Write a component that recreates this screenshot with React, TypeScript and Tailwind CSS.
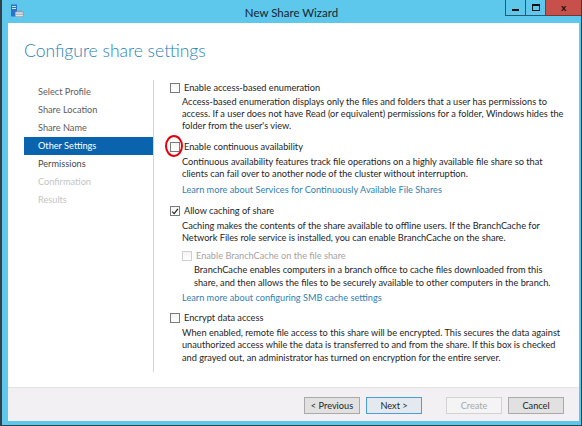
import React from 'react';

const font = { fontFamily: '"Segoe UI", Lato, "Noto Sans", sans-serif' };

const Box: React.FC<{ checked?: boolean; disabled?: boolean }> = ({ checked, disabled }) => (
    <span
        className={`relative inline-flex w-[10px] h-[10px] shrink-0 items-center justify-center border bg-gradient-to-b from-[#f4f4f4] to-white ${disabled ? 'border-[#cfcfcf]' : 'border-[#7a7a7a]'}`}
    >
        {checked && (
            <svg viewBox="0 0 10 10" className="w-[9px] h-[9px]">
                <path d="M1.5 5.2 L4 7.6 L8.6 1.8" fill="none" stroke="#222" strokeWidth="1.5" />
            </svg>
        )}
    </span>
);

const Option: React.FC<{ label: string; checked?: boolean; disabled?: boolean; circled?: boolean }> = ({
    label,
    checked,
    disabled,
    circled,
}) => (
    <div className="flex items-center h-[12px] leading-[12px]">
        <span className="relative inline-flex">
            <Box checked={checked} disabled={disabled} />
            {circled && (
                <span className="absolute left-[-5px] top-[-7px] w-[18px] h-[22px] rounded-[50%] border-2 border-[#e4000f]" />
            )}
        </span>
        <span className={`ml-[4px] ${disabled ? 'text-[#a3a3a3]' : 'text-[#1e1e1e]'}`}>{label}</span>
    </div>
);

const navItems = [
    { name: 'Select Profile', state: 'done' },
    { name: 'Share Location', state: 'done' },
    { name: 'Share Name', state: 'done' },
    { name: 'Other Settings', state: 'active' },
    { name: 'Permissions', state: 'next' },
    { name: 'Confirmation', state: 'off' },
    { name: 'Results', state: 'off' },
];

export default function App() {
    return (
        <div
            className="w-[582px] h-[426px] flex flex-col bg-[#5dc8ec] border-l-2 border-r border-b border-[#33414b] text-[9.2px] overflow-hidden"
            style={font}
        >
            {/* Title bar */}
            <div className="relative h-[23px] shrink-0 flex items-center">
                <svg viewBox="0 0 14 14" className="absolute left-[8px] top-[4px] w-[14px] h-[14px]">
                    <rect x="1" y="0.5" width="6" height="12" fill="#2b72c9" />
                    <rect x="2" y="2" width="4" height="1" fill="#cfe4ff" />
                    <rect x="2" y="4" width="4" height="1" fill="#cfe4ff" />
                    <rect x="5" y="7.5" width="8.5" height="5.5" rx="0.8" fill="#8d99a5" />
                    <rect x="5.7" y="8.3" width="7.1" height="4" fill="#dfe5ea" />
                    <rect x="8" y="6.5" width="3" height="1.3" fill="#8d99a5" />
                    <rect x="5.7" y="9.8" width="7.1" height="0.8" fill="#8d99a5" />
                </svg>
                <div className="flex-1 text-center text-[11.5px] text-[#17242e] pt-[3px]">New Share Wizard</div>
                <div className="absolute right-0 top-0 flex h-[16px]">
                    <div className="w-[21px] h-full border border-[#2a5870] border-t-0 flex items-end justify-center pb-[4px]">
                        <span className="w-[7px] h-[2px] bg-[#111]" />
                    </div>
                    <div className="w-[20px] h-full border border-l-0 border-[#2a5870] border-t-0 flex items-center justify-center">
                        <span className="w-[8px] h-[7px] border border-t-2 border-[#111]" />
                    </div>
                    <div className="w-[35px] h-full bg-[#c7514a] border-b border-[#7a3530] flex items-center justify-center text-[10px] font-bold text-[#111]">
                        x
                    </div>
                </div>
            </div>

            {/* Client area */}
            <div className="flex-1 ml-[6px] mr-[2px] mb-[4px] bg-white flex flex-col">
                <h1 className="pl-[16px] pt-[16px] h-[57px] text-[17.5px] font-light text-[#2b82b8] leading-[23px]" style={{ fontFamily: 'Lato, "Segoe UI", sans-serif' }}>
                    Configure share settings
                </h1>

                <div className="flex flex-1 mb-[15px]">
                    {/* Steps */}
                    <div className="w-[146px] shrink-0 pl-[16px] pt-[3px] border-r border-[#d4d4d4]">
                        {navItems.map((item) => (
                            <div
                                key={item.name}
                                className={`h-[18px] leading-[18px] pl-[14px] w-[129px] ${
                                    item.state === 'active'
                                        ? 'bg-[#0a64ad] text-white'
                                        : item.state === 'off'
                                        ? 'text-[#c4c4c4]'
                                        : item.state === 'next'
                                        ? 'text-[#4a4a4a]'
                                        : 'text-[#5e5e5e]'
                                }`}
                            >
                                {item.name}
                            </div>
                        ))}
                    </div>

                    {/* Options */}
                    <div className="flex-1 pl-[16px] pr-[12px] pt-[2px] text-[#1e1e1e]">
                        <Option label="Enable access-based enumeration" />
                        <p className="mt-[2px] ml-[12px] leading-[12px]">
                            Access-based enumeration displays only the files and folders that a user has permissions to
                            access. If a user does not have Read (or equivalent) permissions for a folder, Windows hides the
                            folder from the user's view.
                        </p>

                        <div className="mt-[9px]">
                            <Option label="Enable continuous availability" circled />
                        </div>
                        <p className="mt-[3px] ml-[12px] leading-[12px]">
                            Continuous availability features track file operations on a highly available file share so that
                            clients can fail over to another node of the cluster without interruption.
                        </p>
                        <p className="mt-[4px] ml-[12px] leading-[12px] text-[#2f7fb4]">
                            Learn more about Services for Continuously Available File Shares
                        </p>

                        <div className="mt-[9px]">
                            <Option label="Allow caching of share" checked />
                        </div>
                        <p className="mt-[3px] ml-[12px] leading-[12px]">
                            Caching makes the contents of the share available to offline users. If the BranchCache for
                            Network Files role service is installed, you can enable BranchCache on the share.
                        </p>
                        <div className="mt-[6px] ml-[12px]">
                            <Option label="Enable BranchCache on the file share" disabled />
                        </div>
                        <p className="mt-[2px] ml-[24px] leading-[12.5px]">
                            BranchCache enables computers in a branch office to cache files downloaded from this
                            share, and then allows the files to be securely available to other computers in the branch.
                        </p>
                        <p className="mt-[3px] ml-[12px] leading-[12px] text-[#2f7fb4]">
                            Learn more about configuring SMB cache settings
                        </p>

                        <div className="mt-[8px]">
                            <Option label="Encrypt data access" />
                        </div>
                        <p className="mt-[3px] ml-[12px] leading-[12.4px]">
                            When enabled, remote file access to this share will be encrypted. This secures the data against
                            unauthorized access while the data is transferred to and from the share. If this box is checked
                            and grayed out, an administrator has turned on encryption for the entire server.
                        </p>
                    </div>
                </div>

                {/* Footer */}
                <div className="h-[34px] shrink-0 bg-[#f3f0f3] border-t border-[#e4e2e4] flex items-center justify-end pr-[15px] pt-[1px]">
                    <button className="w-[56px] h-[17px] bg-[#e1e1e1] border border-[#a9a9a9] text-[#1e1e1e] leading-[15px]">
                        &lt; Previous
                    </button>
                    <button className="ml-[6px] w-[56px] h-[17px] bg-[#e3e9ef] border border-[#4a9ce3] text-[#1e1e1e] leading-[15px]">
                        Next &gt;
                    </button>
                    <button className="ml-[24px] w-[56px] h-[17px] bg-[#f4f4f4] border border-[#d2d2d2] text-[#a8a8a8] leading-[15px]">
                        Create
                    </button>
                    <button className="ml-[6px] w-[56px] h-[17px] bg-[#e1e1e1] border border-[#a9a9a9] text-[#1e1e1e] leading-[15px]">
                        Cancel
                    </button>
                </div>
            </div>
        </div>
    );
}
